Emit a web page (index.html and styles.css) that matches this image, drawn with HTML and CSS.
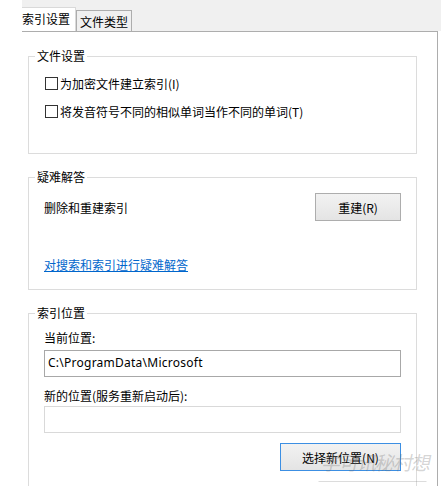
FILE: index.html
```html
<!DOCTYPE html>
<html lang="zh-CN">
<head>
<meta charset="utf-8">
<link rel="stylesheet" href="styles.css">
</head>
<body>
<div class="window">
  <div class="tabstrip">
    <div class="tab tab-active">索引设置</div>
    <div class="tab tab-idle">文件类型</div>
  </div>
  <div class="panel">
    <fieldset class="group group-files">
      <legend>文件设置</legend>
      <label class="check-row"><span class="box"></span><span>为加密文件建立索引(I)</span></label>
      <label class="check-row check-second"><span class="box"></span><span>将发音符号不同的相似单词当作不同的单词(T)</span></label>
    </fieldset>
    <fieldset class="group group-trouble">
      <legend>疑难解答</legend>
      <div class="rebuild-row">
        <span>删除和重建索引</span>
        <button class="btn btn-rebuild">重建(R)</button>
      </div>
      <a class="link" href="#">对搜索和索引进行疑难解答</a>
    </fieldset>
    <fieldset class="group group-location">
      <legend>索引位置</legend>
      <div class="field-label">当前位置:</div>
      <div class="input input-current">C:\ProgramData\Microsoft</div>
      <div class="field-label field-label-new">新的位置(服务重新启动后):</div>
      <div class="input input-new"></div>
      <div class="btn-row">
        <button class="btn btn-select">选择新位置(N)</button>
      </div>
    </fieldset>
  </div>
  <div class="watermark">学可讯秘村想</div>
</div>
</body>
</html>
```

FILE: styles.css
```css
html, body {
  margin: 0;
  padding: 0;
  background: #ffffff;
}
body {
  width: 441px;
  height: 486px;
  overflow: hidden;
  font-family: "Noto Sans CJK SC", "Noto Sans", sans-serif;
  font-size: 12px;
  color: #000;
}
.window {
  position: relative;
  padding-left: 22px;
  height: 486px;
  box-sizing: border-box;
}
.tabstrip {
  height: 31px;
  background: #f0f0f0;
  display: flex;
  align-items: flex-end;
}
.tab {
  box-sizing: border-box;
  line-height: 16px;
}
.tab-active {
  width: 54px;
  height: 24px;
  background: #fff;
  border-top: 1px solid #d9d9d9;
  border-right: 1px solid #d9d9d9;
  padding-top: 3px;
}
.tab-idle {
  width: 56px;
  height: 21px;
  background: #f0f0f0;
  border: 1px solid #adadad;
  border-bottom: none;
  padding-top: 3px;
  text-align: center;
}
.panel {
  margin-right: 3px;
  border-top: 1px solid #adadad;
  border-right: 1px solid #adadad;
  padding: 16px 20px 0 6px;
  height: 460px;
  box-sizing: border-box;
}
.group {
  margin: 0;
  border: 1px solid #dcdcdc;
  padding: 0 15px;
  min-width: 0;
}
.group legend {
  padding: 0 2px;
  margin-left: -9px;
  line-height: 16px;
}
.group-files {
  padding-top: 11px;
  padding-bottom: 34px;
}
.check-row {
  display: flex;
  align-items: center;
  height: 16px;
  gap: 2px;
  margin-left: 1px;
}
.check-second {
  margin-top: 12px;
}
.box {
  width: 13px;
  height: 13px;
  box-sizing: border-box;
  border: 1px solid #333;
  background: #fff;
}
.group-trouble {
  margin-top: 15px;
  padding-top: 8px;
  padding-bottom: 16px;
}
.rebuild-row {
  display: flex;
  justify-content: space-between;
  align-items: center;
}
.btn {
  font-family: "Noto Sans CJK SC", "Noto Sans", sans-serif;
  font-size: 12px;
  height: 28px;
  box-sizing: border-box;
  border: 1px solid #adadad;
  background: linear-gradient(#f2f2f2, #e4e4e4);
  color: #000;
  padding: 0;
  margin: 0;
}
.btn-rebuild {
  width: 86px;
}
.link {
  display: block;
  width: max-content;
  margin-top: 36px;
  line-height: 16px;
  color: #0066cc;
  text-decoration: underline;
}
.group-location {
  margin-top: 15px;
  padding-top: 9px;
  padding-bottom: 30px;
}
.field-label {
  line-height: 16px;
}
.input {
  margin-top: 4px;
  height: 27px;
  box-sizing: border-box;
  border: 1px solid #a8a8a8;
  background: #fff;
  padding-left: 3px;
  line-height: 24px;
  font-family: "Noto Sans", sans-serif;
  font-size: 12px;
  letter-spacing: 0.25px;
}
.field-label-new {
  margin-top: 11px;
}
.input-new {
  margin-top: 2px;
  border-color: #d9d9d9;
}
.btn-row {
  display: flex;
  justify-content: flex-end;
  margin-top: 10px;
}
.btn-select {
  width: 121px;
  border-color: #3c8fe3;
}
.watermark {
  position: absolute;
  left: 322px;
  top: 448px;
  font-size: 19px;
  letter-spacing: -1px;
  color: rgba(110, 110, 110, 0.3);
  transform: skewX(-12deg);
  pointer-events: none;
  white-space: nowrap;
  border-bottom: 1px solid rgba(140, 140, 140, 0.3);
  padding-bottom: 6px;
}
```
